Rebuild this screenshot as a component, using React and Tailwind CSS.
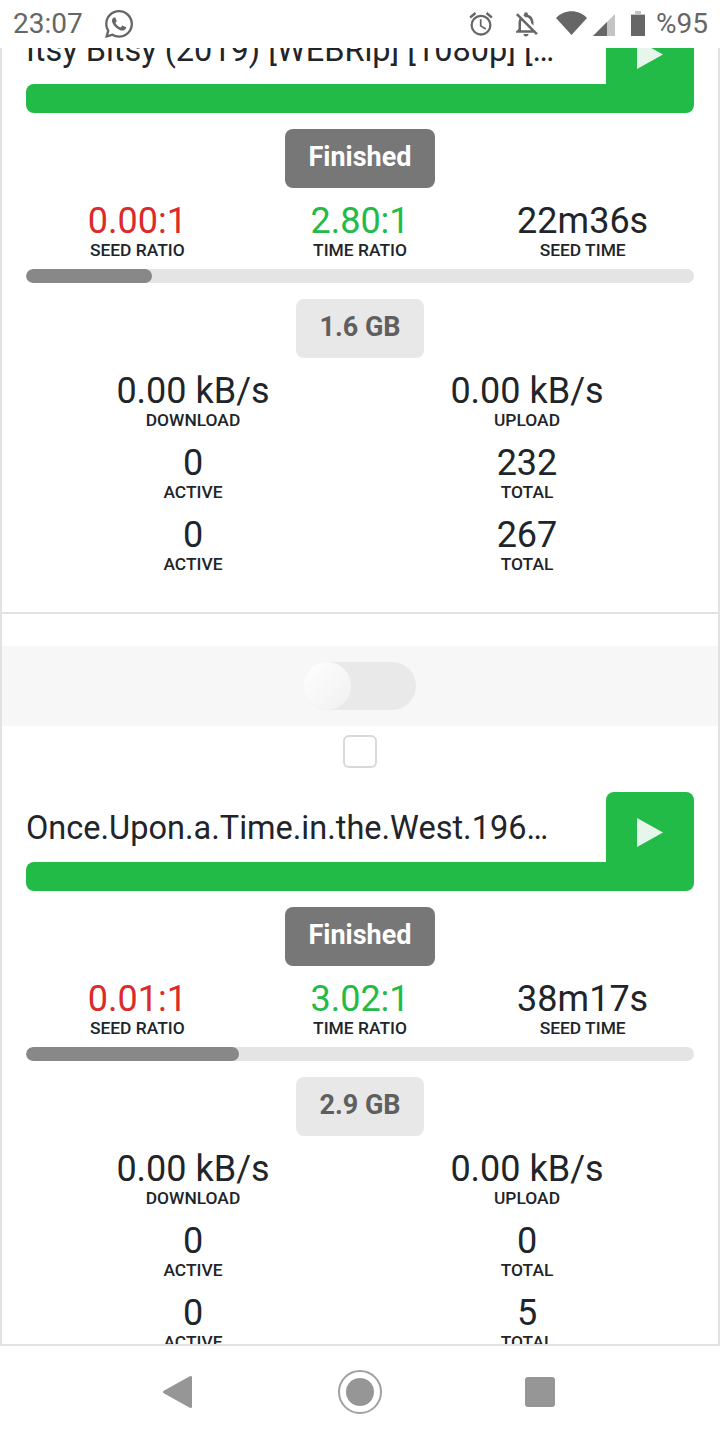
import { FaWhatsapp } from 'react-icons/fa';
import { MdOutlineAlarm, MdOutlineNotificationsOff } from 'react-icons/md';

const torrents = [
  {
    title: 'Itsy Bitsy (2019) [WEBRip] [1080p] [YTS.LT] extra',
    seedRatio: '0.00:1',
    timeRatio: '2.80:1',
    seedTime: '22m36s',
    progress: 'w-[126px]',
    size: '1.6 GB',
    seeders: '232',
    peers: '267',
  },
  {
    title: 'Once.Upon.a.Time.in.the.West.1968.1080p.BluRay.x264',
    seedRatio: '0.01:1',
    timeRatio: '3.02:1',
    seedTime: '38m17s',
    progress: 'w-[213px]',
    size: '2.9 GB',
    seeders: '0',
    peers: '5',
  },
];

function Stat({ value, label, color = 'text-[#212529]' }) {
  return (
    <div className="flex flex-col items-center">
      <span className={`text-[36px] leading-[37px] ${color}`}>{value}</span>
      <span className="text-[17.4px] leading-[20px] font-medium text-[#212529]">{label}</span>
    </div>
  );
}

function Torrent({ t }) {
  return (
    <div>
      <div className="h-[80px] bg-[#f7f7f7] flex items-center justify-center">
        <div className="relative w-[113px] h-[48px] rounded-full bg-[#e9e9e9] ml-[-1px]">
          <div className="absolute left-0 top-0 w-[48px] h-[48px] rounded-full bg-gradient-to-br from-white to-[#f0f0f0]" />
        </div>
      </div>
      <div className="flex justify-center pt-[9px]">
        <div className="w-[34px] h-[33px] rounded-[6px] border-2 border-[#d9d9d9] bg-white" />
      </div>
      <div className="px-[24px] pt-[24px]">
        <div className="flex items-center h-[70px]">
          <div className="flex-1 min-w-0 pr-[40px] pt-[1px] text-[32.5px] leading-[40px] text-[#212529] truncate">
            {t.title}
          </div>
          <div className="w-[88px] h-[70px] shrink-0 bg-[#22bb48] rounded-t-[8px] flex items-center justify-center">
            <svg width="26" height="29" viewBox="0 0 26 29" className="mt-[11px]">
              <path d="M0 0 L26 14.5 L0 29 Z" fill="#e6f6ea" />
            </svg>
          </div>
        </div>
        <div className="h-[29px] bg-[#22bb48] rounded-b-[8px] rounded-tl-[8px]" />
        <div className="flex justify-center pt-[16px]">
          <div className="w-[150px] h-[59px] rounded-[8px] bg-[#777777] flex items-center justify-center text-white text-[27px] font-bold pb-[2px]">
            Finished
          </div>
        </div>
        <div className="grid grid-cols-3 pt-[15px]">
          <Stat value={t.seedRatio} label="SEED RATIO" color="text-[#dc2a2a]" />
          <Stat value={t.timeRatio} label="TIME RATIO" color="text-[#22bb48]" />
          <Stat value={t.seedTime} label="SEED TIME" />
        </div>
        <div className="mt-[9px] h-[14px] rounded-[8px] bg-[#e4e4e4] overflow-hidden">
          <div className={`h-full rounded-[8px] bg-[#888888] ${t.progress}`} />
        </div>
        <div className="flex justify-center pt-[16px]">
          <div className="w-[128px] h-[59px] rounded-[8px] bg-[#e8e8e8] flex items-center justify-center text-[#5f5f5f] text-[27px] font-bold pb-[2px]">
            {t.size}
          </div>
        </div>
        <div className="grid grid-cols-2 pt-[15px] gap-y-[15px]">
          <Stat value="0.00 kB/s" label="DOWNLOAD" />
          <Stat value="0.00 kB/s" label="UPLOAD" />
          <Stat value="0" label="ACTIVE" />
          <Stat value={t.seeders} label="TOTAL" />
          <Stat value="0" label="ACTIVE" />
          <Stat value={t.peers} label="TOTAL" />
        </div>
      </div>
      <div className="h-[38px]" />
      <div className="h-[2px] bg-[#e2e2e2]" />
      <div className="h-[32px]" />
    </div>
  );
}

export default function App() {
  return (
    <div className="w-[720px] h-[1440px] flex flex-col bg-white overflow-hidden font-['Roboto',sans-serif]">
      <div className="h-[48px] shrink-0 flex items-center pl-[13px] pr-[12px] text-[#666666] relative z-10 bg-white">
        <span className="text-[28px]">23:07</span>
        <FaWhatsapp className="ml-[20px] w-[32px] h-[32px]" />
        <div className="ml-auto flex items-center">
          <MdOutlineAlarm className="w-[28px] h-[28px]" />
          <MdOutlineNotificationsOff className="ml-[16px] w-[30px] h-[30px]" />
          <svg width="31" height="24" viewBox="0 0 31 24" className="ml-[15px] mt-[-2px]">
            <path d="M0 7 C8 -2 23 -2 31 7 L15.5 24 Z" fill="#666666" />
          </svg>
          <svg width="22" height="22" viewBox="0 0 22 22" className="ml-[6px] mt-[2px]">
            <path d="M0 22 L22 0 V22 Z" fill="#c4c4c4" />
            <path d="M0 22 L14 8 V22 Z" fill="#666666" />
          </svg>
          <svg width="14" height="25" viewBox="0 0 14 25" className="ml-[16px] mt-[-1px]">
            <path d="M4 0 H10 V3 H14 V25 H0 V3 H4 Z" fill="#666666" />
            <path d="M4 0 H10 V3 H14 V4 H0 V3 H4 Z" fill="#c4c4c4" />
          </svg>
          <span className="ml-[11px] text-[28px]">%95</span>
        </div>
      </div>
      <div className="flex-1 min-h-0 overflow-hidden border-x-2 border-[#e2e2e2]">
        <div className="mt-[-180px]">
          {torrents.map((t) => (
            <Torrent key={t.title} t={t} />
          ))}
        </div>
      </div>
      <div className="h-[96px] shrink-0 border-t-2 border-[#e2e2e2] bg-white flex items-start pl-[163px] pt-[24px]">
        <div className="flex items-center">
          <svg width="29" height="32" viewBox="0 0 29 32">
            <path d="M27.5 1.5 V30.5 L1.5 16 Z" fill="#969696" stroke="#969696" strokeWidth="3" strokeLinejoin="round" />
          </svg>
          <div className="ml-[146px] w-[44px] h-[44px] rounded-full border-2 border-[#a0a0a0] flex items-center justify-center">
            <div className="w-[28px] h-[28px] rounded-full bg-[#969696]" />
          </div>
          <div className="ml-[143px] w-[30px] h-[30px] rounded-[3px] bg-[#969696]" />
        </div>
      </div>
    </div>
  );
}
